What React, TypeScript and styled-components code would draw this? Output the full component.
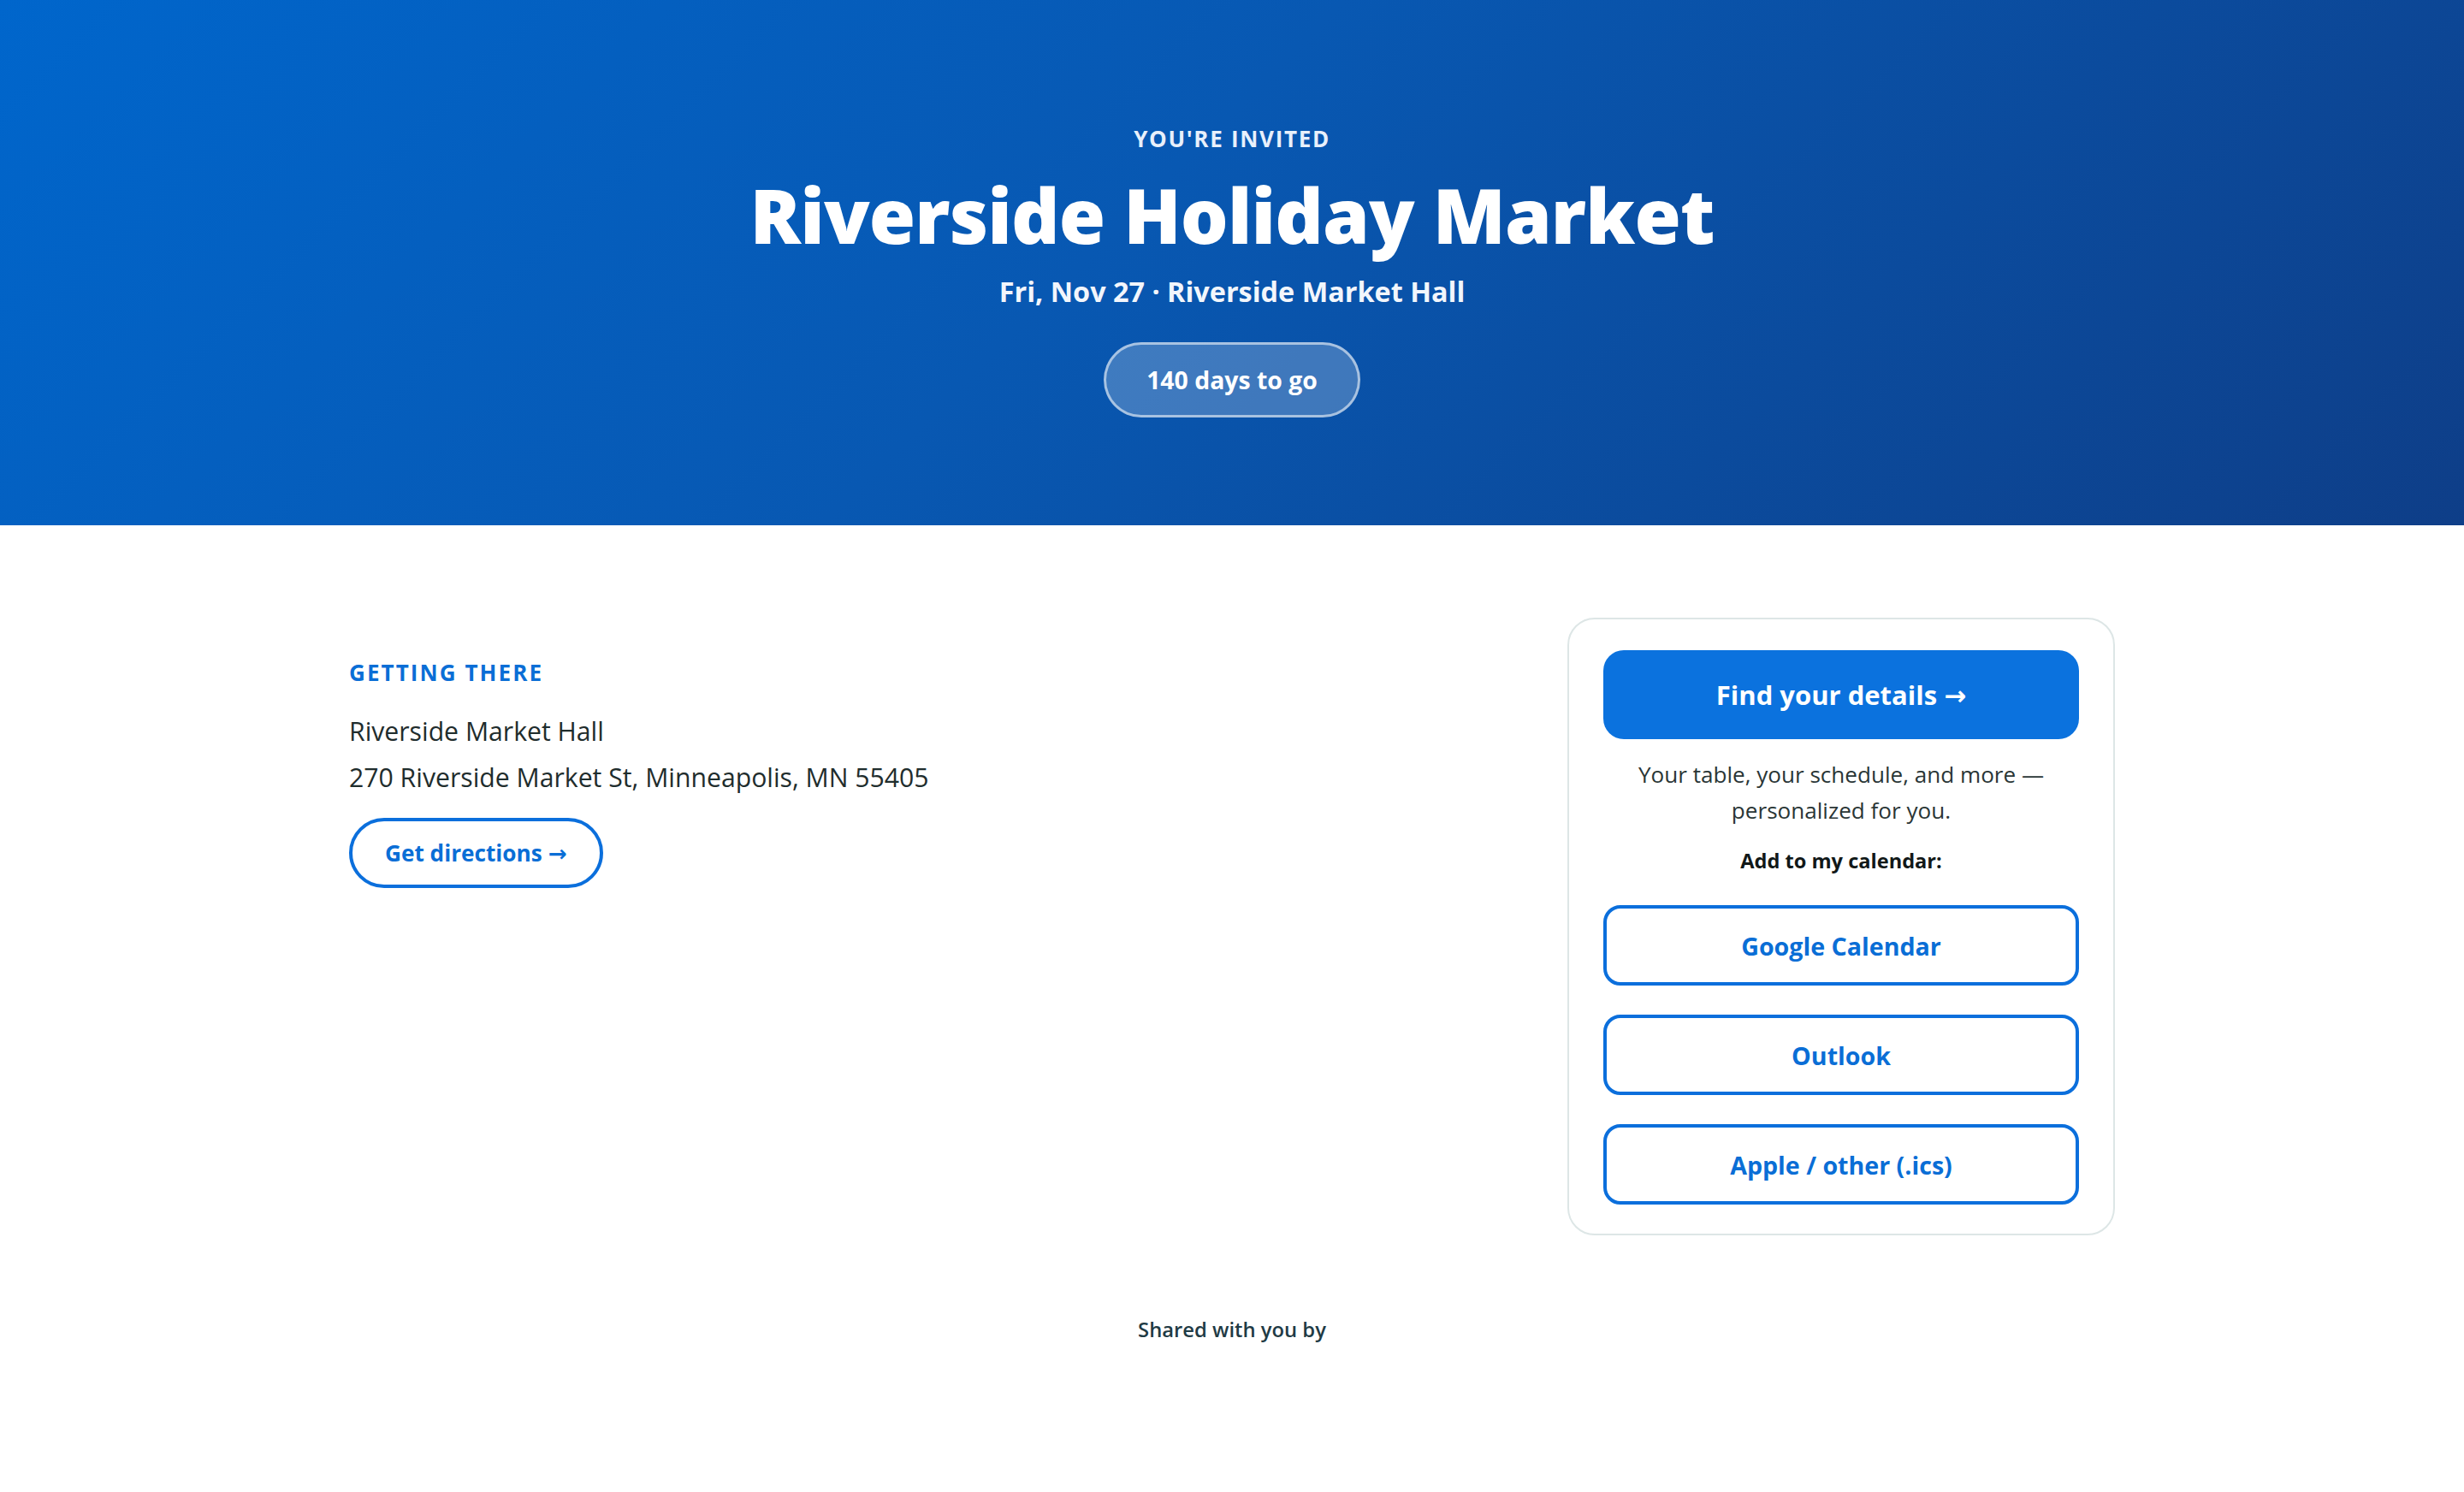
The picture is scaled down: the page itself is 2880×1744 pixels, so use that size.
import React from 'react';
import styled, { createGlobalStyle } from 'styled-components';

const GlobalStyle = createGlobalStyle`
  html, body {
    margin: 0;
    padding: 0;
    background: #ffffff;
  }
  body {
    font-family: 'Open Sans', 'Noto Sans', 'DejaVu Sans', sans-serif;
    color: #1c2b2b;
    -webkit-font-smoothing: antialiased;
  }
  * {
    box-sizing: border-box;
  }
`;

const Hero = styled.header`
  display: flex;
  flex-direction: column;
  align-items: center;
  padding: 146px 48px 126px;
  background: linear-gradient(135deg, #0066cc 0%, #0858b2 45%, #0e3e88 100%);
  color: #ffffff;
  text-align: center;
`;

const Eyebrow = styled.div`
  font-size: 26px;
  line-height: 32px;
  font-weight: 700;
  letter-spacing: 0.065em;
  text-transform: uppercase;
  color: #e8f0fb;
`;

const Title = styled.h1`
  margin: 22px 0 0;
  font-size: 88px;
  line-height: 102px;
  font-weight: 800;
  letter-spacing: -0.01em;
`;

const Subtitle = styled.div`
  margin-top: 16px;
  font-size: 32.4px;
  line-height: 44px;
  font-weight: 700;
  color: #f2f6fc;
`;

const Countdown = styled.div`
  display: flex;
  align-items: center;
  justify-content: center;
  margin-top: 38px;
  width: 300px;
  height: 88px;
  border-radius: 999px;
  border: 3px solid rgba(255, 255, 255, 0.55);
  background: rgba(255, 255, 255, 0.22);
  font-size: 28.4px;
  font-weight: 700;
`;

const Main = styled.main`
  display: flex;
  justify-content: space-between;
  align-items: flex-start;
  max-width: 2160px;
  margin: 0 auto;
  padding: 108px 48px 0;
`;

const Directions = styled.section`
  display: flex;
  flex-direction: column;
  align-items: flex-start;
  padding-top: 48px;
`;

const SectionLabel = styled.h2`
  margin: 0;
  font-size: 26px;
  line-height: 32px;
  font-weight: 700;
  letter-spacing: 0.08em;
  text-transform: uppercase;
  color: #0a6ed6;
`;

const AddressLines = styled.div`
  margin-top: 26px;
  font-size: 30.2px;
  line-height: 54px;
  color: #1f2d2d;
`;

const OutlineLink = styled.a<{ $pill?: boolean }>`
  display: flex;
  align-items: center;
  justify-content: center;
  border: 4px solid #0b6fdc;
  border-radius: ${(p) => (p.$pill ? '999px' : '20px')};
  background: #ffffff;
  color: #0a6ed6;
  font-weight: 700;
  text-decoration: none;
  cursor: pointer;
`;

const DirectionsButton = styled(OutlineLink)`
  margin-top: 20px;
  height: 82px;
  padding: 0 38px;
  font-size: 26.2px;
`;

const Card = styled.aside`
  display: flex;
  flex-direction: column;
  align-items: stretch;
  width: 640px;
  padding: 36px 40px 34px;
  border: 2px solid #dde6e6;
  border-radius: 32px;
  background: #ffffff;
  text-align: center;
`;

const PrimaryButton = styled.a`
  display: flex;
  align-items: center;
  justify-content: center;
  height: 104px;
  border-radius: 24px;
  background: #0b72de;
  color: #ffffff;
  font-size: 31px;
  font-weight: 700;
  text-decoration: none;
`;

const Note = styled.p`
  margin: 20px 0 0;
  font-size: 26.1px;
  line-height: 42px;
  color: #2a3636;
`;

const CalendarLabel = styled.div`
  margin-top: 20px;
  font-size: 23.6px;
  line-height: 36px;
  font-weight: 700;
  color: #111818;
`;

const CalendarList = styled.div`
  display: flex;
  flex-direction: column;
  gap: 34px;
  margin-top: 34px;
`;

const CalendarButton = styled(OutlineLink)`
  height: 94px;
  font-size: 28.6px;
`;

const Footer = styled.footer`
  padding: 92px 48px 80px;
  text-align: center;
  font-size: 23.8px;
  line-height: 36px;
  font-weight: 600;
  color: #1f3b45;
`;

const calendars = ['Google Calendar', 'Outlook', 'Apple / other (.ics)'];

export default function App() {
  return (
    <>
      <GlobalStyle />
      <Hero>
        <Eyebrow>You're invited</Eyebrow>
        <Title>Riverside Holiday Market</Title>
        <Subtitle>Fri, Nov 27 · Riverside Market Hall</Subtitle>
        <Countdown>140 days to go</Countdown>
      </Hero>
      <Main>
        <Directions>
          <SectionLabel>Getting there</SectionLabel>
          <AddressLines>
            <div>Riverside Market Hall</div>
            <div>270 Riverside Market St, Minneapolis, MN 55405</div>
          </AddressLines>
          <DirectionsButton $pill>Get directions →</DirectionsButton>
        </Directions>
        <Card>
          <PrimaryButton>Find your details →</PrimaryButton>
          <Note>
            Your table, your schedule, and more —
            <br />
            personalized for you.
          </Note>
          <CalendarLabel>Add to my calendar:</CalendarLabel>
          <CalendarList>
            {calendars.map((name) => (
              <CalendarButton key={name}>{name}</CalendarButton>
            ))}
          </CalendarList>
        </Card>
      </Main>
      <Footer>Shared with you by</Footer>
    </>
  );
}
